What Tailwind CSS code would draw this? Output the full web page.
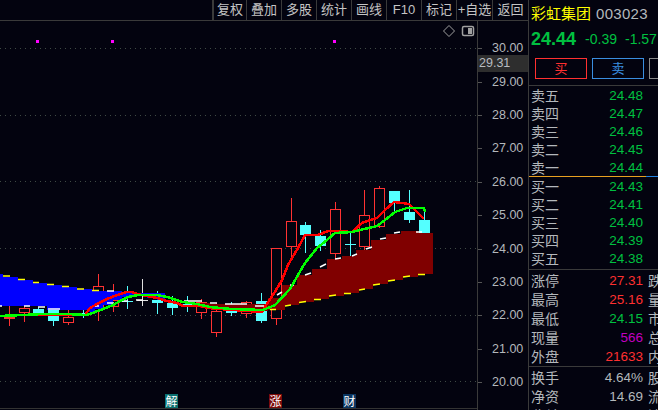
<!DOCTYPE html>
<html lang="zh">
<head>
    <meta charset="UTF-8">
    <title>彩虹集团 003023</title>
    <script src="https://cdn.jsdelivr.net/npm/@tailwindcss/browser@4"></script>
</head>
<body class="bg-[#03030f]">
<div class="flex w-[658px] h-[410px] overflow-hidden bg-[#03030f] text-[#b4b8bc] font-['Liberation_Sans','Noto_Sans_CJK_SC',sans-serif]">

    <!-- left: toolbar + chart + price axis -->
    <div class="w-[528px] flex flex-col shrink-0">
        <div class="h-[21px] flex justify-end border-b border-[#3a3a3a] text-[13px] leading-[20px] text-center text-[#c4c4c4]">
            <div class="w-[34px] border-l-2 border-[#3a3a3a]">复权</div>
            <div class="w-[35px] border-l border-[#3a3a3a]">叠加</div>
            <div class="w-[35px] border-l border-[#3a3a3a]">多股</div>
            <div class="w-[35px] border-l border-[#3a3a3a]">统计</div>
            <div class="w-[35px] border-l border-[#3a3a3a]">画线</div>
            <div class="w-[35px] border-l border-[#3a3a3a]">F10</div>
            <div class="w-[35px] border-l border-[#3a3a3a]">标记</div>
            <div class="w-[36px] border-l border-[#3a3a3a] whitespace-nowrap">+自选</div>
            <div class="w-[36px] border-l border-[#3a3a3a]">返回</div>
        </div>
        <div class="flex flex-1">
            <svg id="chart" class="w-[477px] h-[389px] block" viewBox="0 21 477 389">
                <g stroke="#3f4a44" stroke-width="1" stroke-dasharray="1 4">
                    <line x1="0" x2="477" y1="48.5" y2="48.5"/>
                    <line x1="0" x2="477" y1="115.5" y2="115.5"/>
                    <line x1="0" x2="477" y1="181.5" y2="181.5"/>
                    <line x1="0" x2="477" y1="248.5" y2="248.5"/>
                    <line x1="0" x2="477" y1="315.5" y2="315.5"/>
                    <line x1="0" x2="477" y1="381.5" y2="381.5"/>
                </g>
                <line x1="0" x2="477" y1="408.5" y2="408.5" stroke="#333"/>
                <g fill="#ff00ff">
                    <rect x="36" y="40" width="3" height="3"/>
                    <rect x="111" y="40" width="3" height="3"/>
                    <rect x="333" y="40" width="3" height="3"/>
                </g>
                <g fill="none" stroke="#a0a0a0">
                    <path d="M449 25.5l5.5 5.500-5.500 5.500-5.500-5.500z"/>
                    <rect x="462.500" y="26.500" width="11" height="9" rx="1.500" stroke-width="1.500"/>
                </g>
                <rect x="468" y="28" width="4" height="6" fill="#a0a0a0"/>
                <g id="candles" shape-rendering="crispEdges"></g>
                <!-- blue cloud -->
                <path shape-rendering="crispEdges" fill="#0000ff" d="M0 274H3V277H18V280H33V283H47V285H62V287H77V289H92V291H122V292H132V293H165V300H157V298H147V296H128V297H122V300H113V305H103V309H95V312H87V310H47V306H0Z"/>
                <!-- dark red cloud -->
                <path shape-rendering="crispEdges" fill="#800000" d="M200 303H210V304H268V298H282V285H297V275H312V269H327V259H342V256H356V250H371V240H386V234H401V231H418V233H433V274H418V277H403V280H388V284H373V289H359V293H344V296H329V299H314V302H299V305H285V310H268V311H240V309H210V308H200Z"/>
                <path fill="none" stroke="#ffffff" stroke-width="1.500" d="M0 306h2M24 306h6M38 307h7M48 309h12M92 306h7M107 303h7M107 291h7M122 301h6M136 300h7M184 301h18M210 303h7M225 304h22M255 306h12M277 295l5-3M290 285h4M305 275l6-2M320 267l6-3M335 259l6-1M352 256l5-2M366 249l6-2M380 239l6-1M394 233l6-1M416 232h6"/>
                <path fill="none" stroke="#ffff00" stroke-width="1.500" d="M3 276h7M18 279.500h7M33 282.500h6M47 284.500h7M62 286.500h7M77 289h7M92 290.500h7M270 309.500h6M285 306l6-1M299 302.500l7-1M314 299.500h7M329 296l7-1M344 293.500h7M359 290l6-1M373 285l7-1M388 281l7-1M403 277l7-1M418 274.500h7"/>
                <polyline shape-rendering="crispEdges" fill="none" stroke="#ff0000" stroke-width="2.500" points="17,315 85,315 90,308 97,304 107,299 117,295 127,292 132,292 137,294 147,296 157,298 167,301 177,303 183,306 200,306 208,308 220,309 233,310 262,312 265,307 273,295 282,280 288,265 298,248 305,235 318,235 328,231 335,231 352,232 362,223 370,220 377,218 385,210 394,202 402,203 409,204 417,212 424,219"/>
                <polyline shape-rendering="crispEdges" fill="none" stroke="#00ff00" stroke-width="2.500" points="0,316 23,315 43,314 67,314 87,315 95,312 103,309 113,305 122,300 128,297 138,295 157,295 167,297 183,302 197,304 210,307 220,308 232,309 263,310 275,305 290,289 298,275 305,263 317,248 327,240 335,233 352,232 360,230 377,226 385,220 395,212 407,208 424,208 425,212"/>
            </svg>
            <div class="relative w-[51px] border-l border-[#3a3a3a] pt-[11px] text-[12.500px]">
                <div class="absolute left-0 top-[34px] w-[50px] h-[17px] bg-[#2e2e2e] pl-[1px] leading-[17px] text-[#b8bcc0]">29.31</div>
                <div class="h-[33.4px] flex items-center"><span class="w-[4px] h-px bg-[#555]"></span><span class="ml-[10px]">30.00</span></div>
                <div class="h-[33.4px] flex items-center"><span class="w-[4px] h-px bg-[#555]"></span><span class="ml-[10px]">29.00</span></div>
                <div class="h-[33.4px] flex items-center"><span class="w-[4px] h-px bg-[#555]"></span><span class="ml-[10px]">28.00</span></div>
                <div class="h-[33.4px] flex items-center"><span class="w-[4px] h-px bg-[#555]"></span><span class="ml-[10px]">27.00</span></div>
                <div class="h-[33.4px] flex items-center"><span class="w-[4px] h-px bg-[#555]"></span><span class="ml-[10px]">26.00</span></div>
                <div class="h-[33.4px] flex items-center"><span class="w-[4px] h-px bg-[#555]"></span><span class="ml-[10px]">25.00</span></div>
                <div class="h-[33.4px] flex items-center"><span class="w-[4px] h-px bg-[#555]"></span><span class="ml-[10px]">24.00</span></div>
                <div class="h-[33.4px] flex items-center"><span class="w-[4px] h-px bg-[#555]"></span><span class="ml-[10px]">23.00</span></div>
                <div class="h-[33.4px] flex items-center"><span class="w-[4px] h-px bg-[#555]"></span><span class="ml-[10px]">22.00</span></div>
                <div class="h-[33.4px] flex items-center"><span class="w-[4px] h-px bg-[#555]"></span><span class="ml-[10px]">21.00</span></div>
                <div class="h-[33.4px] flex items-center"><span class="w-[4px] h-px bg-[#555]"></span><span class="ml-[10px]">20.00</span></div>
            </div>
        </div>
    </div>

    <!-- right: quote panel -->
    <div class="relative w-[130px] h-[410px] shrink-0 border-l border-[#3a3a3a] overflow-hidden text-[14px]">
        <div class="h-[28px] flex items-center pl-[2px] pt-px whitespace-nowrap">
            <span class="text-[15px] text-[#ffff00]">彩虹集团</span>
            <span class="ml-[5px] text-[15px] tracking-[0.3px] text-[#b4b8bc]">003023</span>
        </div>
        <div class="h-[22px] flex items-center pl-[2px] whitespace-nowrap text-[#00c040]">
            <span class="text-[18px] font-bold">24.44</span>
            <span class="ml-[9px] text-[14px]">-0.39</span>
            <span class="ml-[8px] text-[14px]">-1.57</span>
        </div>
        <div class="h-[36px] flex gap-[5px] pl-[6px] pt-[8px] border-b border-[#3a3a3a] whitespace-nowrap text-[13px] text-center leading-[19px]">
            <div class="w-[52px] h-[21px] shrink-0 border border-[#ff3030] text-[#ff3030]">买</div>
            <div class="w-[52px] h-[21px] shrink-0 border border-[#3a8ee0] text-[#3a8ee0]">卖</div>
            <div class="w-[52px] h-[21px] shrink-0 border border-[#888]"></div>
        </div>
        <div class="h-[90px] pt-[1px] w-[114px] text-[#00c040]">
            <div class="h-[17.9px] flex items-center justify-between pl-[2px] leading-none"><span class="text-[#b4b8bc]">卖五</span><span class="text-[13.500px]">24.48</span></div>
            <div class="h-[17.9px] flex items-center justify-between pl-[2px] leading-none"><span class="text-[#b4b8bc]">卖四</span><span class="text-[13.500px]">24.47</span></div>
            <div class="h-[17.9px] flex items-center justify-between pl-[2px] leading-none"><span class="text-[#b4b8bc]">卖三</span><span class="text-[13.500px]">24.46</span></div>
            <div class="h-[17.9px] flex items-center justify-between pl-[2px] leading-none"><span class="text-[#b4b8bc]">卖二</span><span class="text-[13.500px]">24.45</span></div>
            <div class="h-[17.9px] flex items-center justify-between pl-[2px] leading-none"><span class="text-[#b4b8bc]">卖一</span><span class="text-[13.500px]">24.44</span></div>
        </div>
        <div class="flex h-px"><div class="w-[117px] bg-[#e8a020]"></div><div class="flex-1 bg-[#2080e0]"></div></div>
        <div class="h-[92px] w-[114px] pt-[1px] text-[#00c040]">
            <div class="h-[18px] flex items-center justify-between pl-[2px] leading-none"><span class="text-[#b4b8bc]">买一</span><span class="text-[13.500px]">24.43</span></div>
            <div class="h-[18px] flex items-center justify-between pl-[2px] leading-none"><span class="text-[#b4b8bc]">买二</span><span class="text-[13.500px]">24.41</span></div>
            <div class="h-[18px] flex items-center justify-between pl-[2px] leading-none"><span class="text-[#b4b8bc]">买三</span><span class="text-[13.500px]">24.40</span></div>
            <div class="h-[18px] flex items-center justify-between pl-[2px] leading-none"><span class="text-[#b4b8bc]">买四</span><span class="text-[13.500px]">24.39</span></div>
            <div class="h-[18px] flex items-center justify-between pl-[2px] leading-none"><span class="text-[#b4b8bc]">买五</span><span class="text-[13.500px]">24.38</span></div>
        </div>
        <div class="h-[97px] pt-[1px] border-t border-[#3a3a3a]">
            <div class="h-[19px] w-[133px] flex items-center pl-[2px] leading-none"><span>涨停</span><span class="ml-auto text-[13.500px] text-[#ff3030]">27.31</span><span class="ml-[5px] w-[14px] shrink-0">跌</span></div>
            <div class="h-[19px] w-[133px] flex items-center pl-[2px] leading-none"><span>最高</span><span class="ml-auto text-[13.500px] text-[#ff3030]">25.16</span><span class="ml-[5px] w-[14px] shrink-0">量</span></div>
            <div class="h-[19px] w-[133px] flex items-center pl-[2px] leading-none"><span>最低</span><span class="ml-auto text-[13.500px] text-[#00c040]">24.15</span><span class="ml-[5px] w-[14px] shrink-0">市</span></div>
            <div class="h-[19px] w-[133px] flex items-center pl-[2px] leading-none"><span>现量</span><span class="ml-auto text-[13.500px] text-[#c000c0]">566</span><span class="ml-[5px] w-[14px] shrink-0">总</span></div>
            <div class="h-[19px] w-[133px] flex items-center pl-[2px] leading-none"><span>外盘</span><span class="ml-auto text-[13.500px] text-[#ff3030]">21633</span><span class="ml-[5px] w-[14px] shrink-0">内</span></div>
        </div>
        <div class="pt-[1px] border-t border-[#3a3a3a]">
            <div class="h-[19px] w-[133px] flex items-center pl-[2px] leading-none"><span>换手</span><span class="ml-auto text-[13.500px]">4.64%</span><span class="ml-[5px] w-[14px] shrink-0">股</span></div>
            <div class="h-[19px] w-[133px] flex items-center pl-[2px] leading-none"><span>净资</span><span class="ml-auto text-[13.500px]">14.69</span><span class="ml-[5px] w-[14px] shrink-0">流</span></div>
            <div class="h-[19px] w-[133px] flex items-center pl-[2px] leading-none"><span>收益(一)</span><span class="ml-auto text-[13.500px]">0.110</span><span class="ml-[5px] w-[14px] shrink-0">流</span></div>
        </div>
    </div>

    <!-- event markers under the chart -->
    <div class="absolute left-[165px] top-[394px] w-[13px] h-[14px] bg-[#0a7070] text-white text-[12px] leading-[14px] text-center font-['Noto_Sans_CJK_SC',sans-serif]">解</div>
    <div class="absolute left-[269px] top-[394px] w-[13px] h-[14px] bg-[#7a0a0a] text-white text-[12px] leading-[14px] text-center font-['Noto_Sans_CJK_SC',sans-serif]">涨</div>
    <div class="absolute left-[343px] top-[394px] w-[13px] h-[14px] bg-[#0a3560] text-white text-[12px] leading-[14px] text-center font-['Noto_Sans_CJK_SC',sans-serif]">财</div>
</div>

<script>
    // x, high, open(top), close(bottom), low, type: r = hollow red, c = cyan, w = white
    const bars = [
        [9, 305, 317, 318, 326, 'r'], [24, 306, 308, 312, 322, 'r'], [38, 307, 309, 313, 315, 'c'],
        [53, 309, 309, 321, 326, 'c'], [68, 310, 317, 322, 325, 'r'], [83, 310, 313, 314, 318, 'c'],
        [98, 274, 286, 306, 321, 'r'], [113, 284, 300, 306, 312, 'r'], [127, 286, 301, 301, 309, 'c'],
        [142, 279, 300, 300, 306, 'w'], [157, 291, 300, 303, 314, 'c'], [172, 296, 303, 308, 315, 'c'],
        [187, 296, 304, 304, 312, 'c'], [201, 299, 302, 312, 319, 'r'], [216, 303, 311, 332, 337, 'r'],
        [231, 302, 304, 313, 316, 'c'], [246, 301, 302, 313, 318, 'r'], [261, 293, 301, 321, 323, 'c'],
        [276, 248, 248, 318, 325, 'r'], [291, 198, 221, 246, 258, 'r'], [305, 222, 225, 235, 253, 'c'],
        [320, 230, 236, 246, 251, 'c'], [335, 202, 209, 253, 259, 'r'], [350, 232, 244, 244, 256, 'c'],
        [364, 190, 215, 246, 250, 'r'], [379, 186, 188, 226, 228, 'r'], [394, 191, 191, 203, 213, 'c'],
        [409, 190, 212, 220, 223, 'c'], [424, 208, 220, 233, 233, 'c']
    ];
    const colors = { r: '#ff3232', c: '#54ffff', w: '#e0e0e0' };
    const g = document.getElementById('candles');
    let out = '';
    bars.forEach(([x, hi, top, bot, lo, t]) => {
        const c = colors[t];
        out += `<line x1="${x + .5}" x2="${x + .5}" y1="${hi}" y2="${top}" stroke="${c}"/>`;
        out += `<line x1="${x + .5}" x2="${x + .5}" y1="${bot}" y2="${lo}" stroke="${c}"/>`;
        if (t === 'r') {
            out += `<rect x="${x - 5 + .5}" y="${top + .5}" width="10" height="${Math.max(bot - top, 1)}" fill="#03030f" stroke="${c}"/>`;
        } else {
            out += `<rect x="${x - 5}" y="${top}" width="11" height="${Math.max(bot - top, 1)}" fill="${c}"/>`;
        }
    });
    g.innerHTML = out;
</script>
</body>
</html>
